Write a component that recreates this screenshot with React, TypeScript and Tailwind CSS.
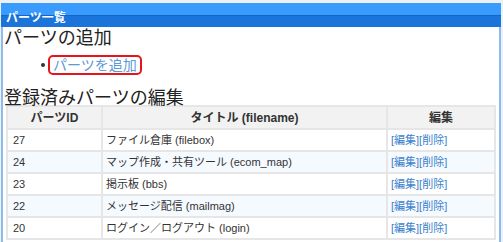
import React from 'react';

const rows = [
  { id: '27', title: 'ファイル倉庫 (filebox)' },
  { id: '24', title: 'マップ作成・共有ツール (ecom_map)' },
  { id: '23', title: '掲示板 (bbs)' },
  { id: '22', title: 'メッセージ配信 (mailmag)' },
  { id: '20', title: 'ログイン／ログアウト (login)' },
];

export default function App() {
  return (
    <div
      className="w-[503px] h-[242px] overflow-hidden bg-[#eef1f4] pt-[3px] pr-[2px]"
      style={{ fontFamily: '"Liberation Sans", "Noto Sans CJK JP", sans-serif' }}
    >
      <div className="h-[239px] bg-white border-l-2 border-r-2 border-[#8dbcf0] ml-[1px]">
        {/* Header */}
        <div className="h-[24px] flex flex-col -ml-[2px] -mr-[2px]">
          <div className="h-[12px] bg-[#3a9bff]" />
          <div className="h-[12px] bg-[#1b74da] border-t border-[#1566c4]" />
          <div className="-mt-[24px] h-[24px] flex items-center pl-[5px] pt-[5px] text-white text-[12px] font-bold">
            パーツ一覧
          </div>
        </div>

        <h2 className="text-[18px] leading-[22px] text-[#222] pl-[1px] mt-0">パーツの追加</h2>

        <ul className="mt-[6px] pl-[38px]">
          <li className="flex items-center gap-[2px]">
            <span className="w-[4px] h-[4px] rounded-full bg-[#333] mr-[1px]" />
            <a className="border-2 border-[#e8141c] rounded-[5px] px-[3px] h-[20px] flex items-center text-[14px] text-[#5b9ad8]">
              パーツを追加
            </a>
          </li>
        </ul>

        <h2 className="text-[18px] leading-[22px] text-[#222] pl-[1px] mt-[12px]">登録済みパーツの編集</h2>

        <table className="ml-[3px] w-[490px] border-collapse text-[11px] text-[#333] -mt-[4px]">
          <thead>
            <tr className="bg-[#f2f2f2] h-[23px]">
              <th className="w-[95px] border-2 border-[#e6e6e6] font-bold text-[12px] text-center p-0">パーツID</th>
              <th className="w-[285px] border-2 border-[#e6e6e6] font-bold text-[12px] text-center p-0">タイトル (filename)</th>
              <th className="border-2 border-[#e6e6e6] font-bold text-[12px] text-center p-0">編集</th>
            </tr>
          </thead>
          <tbody>
            {rows.map((r, i) => (
              <tr key={r.id} className={`h-[22px] ${i % 2 === 1 ? 'bg-[#f5faff]' : 'bg-white'}`}>
                <td className="border-2 border-[#e6e6e6] pl-[5px] py-0 leading-[14px]">{r.id}</td>
                <td className="border-2 border-[#e6e6e6] pl-[3px] py-0 leading-[14px]">{r.title}</td>
                <td className="border-2 border-[#e6e6e6] pl-[3px] py-0 leading-[14px] text-[#3b7fcc]">[編集][削除]</td>
              </tr>
            ))}
          </tbody>
        </table>
      </div>
    </div>
  );
}
